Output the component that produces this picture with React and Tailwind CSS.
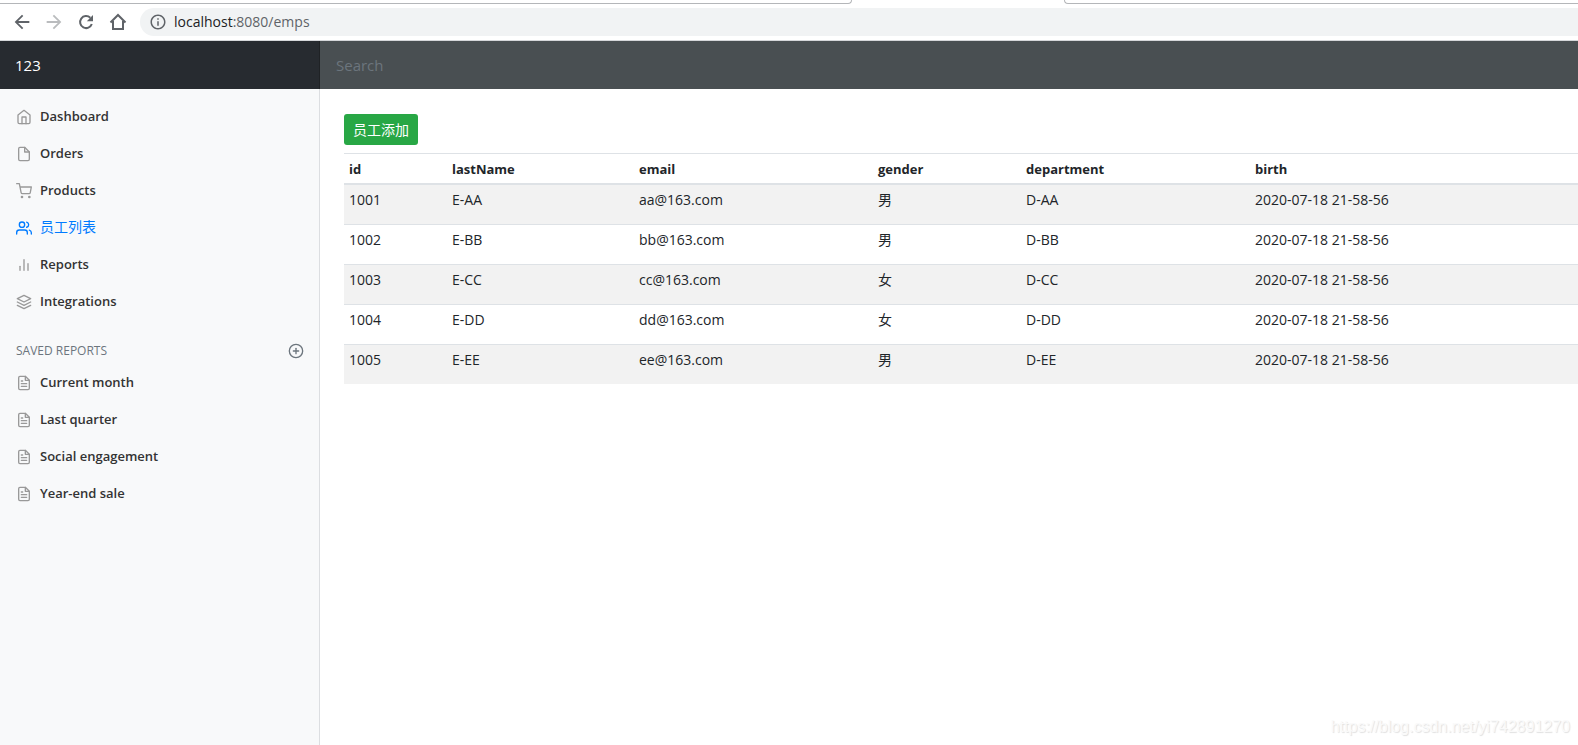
import { FiBarChart2, FiFile, FiFileText, FiHome, FiLayers, FiPlusCircle, FiShoppingCart, FiUsers } from "react-icons/fi";
import { MdArrowBack, MdArrowForward, MdInfoOutline } from "react-icons/md";

const mainLinks = [
  { label: "Dashboard", icon: FiHome },
  { label: "Orders", icon: FiFile },
  { label: "Products", icon: FiShoppingCart },
  { label: "员工列表", icon: FiUsers, active: true },
  { label: "Reports", icon: FiBarChart2 },
  { label: "Integrations", icon: FiLayers },
];

const reportLinks = ["Current month", "Last quarter", "Social engagement", "Year-end sale"].map((label) => ({
  label,
  icon: FiFileText,
}));

const employees = [
  { id: 1001, lastName: "E-AA", email: "aa@163.com", gender: "男", department: "D-AA", birth: "2020-07-18 21-58-56" },
  { id: 1002, lastName: "E-BB", email: "bb@163.com", gender: "男", department: "D-BB", birth: "2020-07-18 21-58-56" },
  { id: 1003, lastName: "E-CC", email: "cc@163.com", gender: "女", department: "D-CC", birth: "2020-07-18 21-58-56" },
  { id: 1004, lastName: "E-DD", email: "dd@163.com", gender: "女", department: "D-DD", birth: "2020-07-18 21-58-56" },
  { id: 1005, lastName: "E-EE", email: "ee@163.com", gender: "男", department: "D-EE", birth: "2020-07-18 21-58-56" },
];

const columns = [
  { key: "id", width: "w-[103px]" },
  { key: "lastName", width: "w-[187px]" },
  { key: "email", width: "w-[239px]" },
  { key: "gender", width: "w-[148px]" },
  { key: "department", width: "w-[229px]" },
  { key: "birth", width: "" },
];

function HomeOutline() {
  return (
    <svg viewBox="0 0 18 18" className="size-[18px]" fill="none" stroke="currentColor" strokeWidth="2" aria-hidden="true">
      <path d="M1.5 9.5 9 2l7.5 7.5M4 8v8h10V8" />
    </svg>
  );
}

function Reload() {
  return (
    <svg viewBox="0 0 22 22" className="size-[22px]" aria-hidden="true">
      <path d="M16.8 13a6 6 0 1 1-1.5-6.2" fill="none" stroke="currentColor" strokeWidth="2" />
      <path d="M18 4v6.200h-6.200z" fill="currentColor" />
    </svg>
  );
}

function BrowserBar() {
  return (
    <div className="shrink-0 border-b border-[#d5d7da] bg-white">
      <div className="flex h-1 justify-between">
        <div className="w-[852px] rounded-br-lg border-r border-b border-[#b4b6b9]" />
        <div className="ml-[212px] flex-1 rounded-bl-lg border-b border-l border-[#b4b6b9]" />
      </div>
      <div className="flex h-9 items-center text-[#5f6368]">
        <div className="flex items-center gap-2.5 pl-[11px]">
          <button type="button" aria-label="Back"><MdArrowBack className="size-[22px]" /></button>
          <button type="button" aria-label="Forward" className="text-[#babcbe]"><MdArrowForward className="size-[22px]" /></button>
          <button type="button" aria-label="Reload"><Reload /></button>
          <button type="button" aria-label="Home" className="ml-0.5"><HomeOutline /></button>
        </div>
        <div className="ml-[13px] flex h-7 flex-1 items-center gap-[7px] rounded-l-full bg-[#f1f3f4] pl-[9px]">
          <MdInfoOutline className="size-[18px]" />
          <p className="text-[14px] leading-5">
            <span className="text-[#202124]">localhost</span>:8080/emps
          </p>
        </div>
      </div>
    </div>
  );
}

function NavLinks({ links }) {
  return (
    <ul>
      {links.map(({ label, icon: Icon, active }) => (
        <li key={label}>
          <a
            href="#"
            className={
              active
                ? "flex h-[37px] items-center gap-2 px-4 text-[14px] text-[#007bff]"
                : "flex h-[37px] items-center gap-2 px-4 pt-0.5 text-[13px] font-semibold text-[#333]"
            }
          >
            <Icon className={active ? "mt-0.5 size-4" : "size-4 text-[#999]"} />
            {label}
          </a>
        </li>
      ))}
    </ul>
  );
}

function Sidebar() {
  return (
    <nav className="w-80 shrink-0 border-r border-[#dcdee1] bg-[#f8f9fa] pt-2">
      <NavLinks links={mainLinks} />
      <div className="mt-6 mb-1 flex h-4 items-center justify-between pr-[15px] pl-4 text-[#6c757d]">
        <h6 className="text-[12px] leading-4 uppercase">Saved reports</h6>
        <a href="#" aria-label="Add a new report"><FiPlusCircle className="size-4" /></a>
      </div>
      <NavLinks links={reportLinks} />
    </nav>
  );
}

function EmployeeTable() {
  return (
    <table className="mt-2 w-full table-fixed border-separate border-spacing-0 text-left text-[14px] leading-[21px]">
      <thead>
        <tr>
          {columns.map(({ key, width }) => (
            <th key={key} className={`${width} h-8 border-t border-b-2 border-[#dee2e6] px-[5px] pt-0.5 text-[13px] font-bold`}>
              {key}
            </th>
          ))}
        </tr>
      </thead>
      <tbody>
        {employees.map((employee) => (
          <tr key={employee.id} className="group odd:bg-[#f2f2f2]">
            {columns.map(({ key }) => (
              <td key={key} className="h-10 border-b border-[#dee2e6] px-[5px] pt-1 align-top group-last:h-[39px] group-last:border-b-0">
                {employee[key]}
              </td>
            ))}
          </tr>
        ))}
      </tbody>
    </table>
  );
}

export default function App() {
  return (
    <div className="relative flex min-h-screen flex-col bg-white font-['Open_Sans','Noto_Sans_CJK_SC',sans-serif] text-[#212529]">
      <BrowserBar />
      <header className="flex h-12 shrink-0 bg-[#343a40]">
        <a href="#" className="flex w-80 shrink-0 items-center border-r border-[#1f2225] bg-[#272b30] px-[15px] text-[15px] text-white">
          123
        </a>
        <input
          type="text"
          aria-label="Search"
          placeholder="Search"
          className="min-w-0 flex-1 bg-[#494f52] px-4 text-[15px] text-white outline-none placeholder:text-[#6c757d]"
        />
      </header>
      <div className="flex flex-1">
        <Sidebar />
        <main className="min-w-0 flex-1 pt-[25px] pl-6">
          <a href="#" className="inline-flex h-[31px] items-center rounded-[3px] bg-[#28a745] px-[9px] text-[14px] leading-[21px] text-white">
            员工添加
          </a>
          <EmployeeTable />
        </main>
      </div>
      <p className="pointer-events-none absolute right-2 bottom-1.5 font-['Liberation_Sans',sans-serif] text-[16px] text-[#fafafa] [text-shadow:1px_1px_1px_#e0e0e0]">
        https://blog.csdn.net/yi742891270
      </p>
    </div>
  );
}
